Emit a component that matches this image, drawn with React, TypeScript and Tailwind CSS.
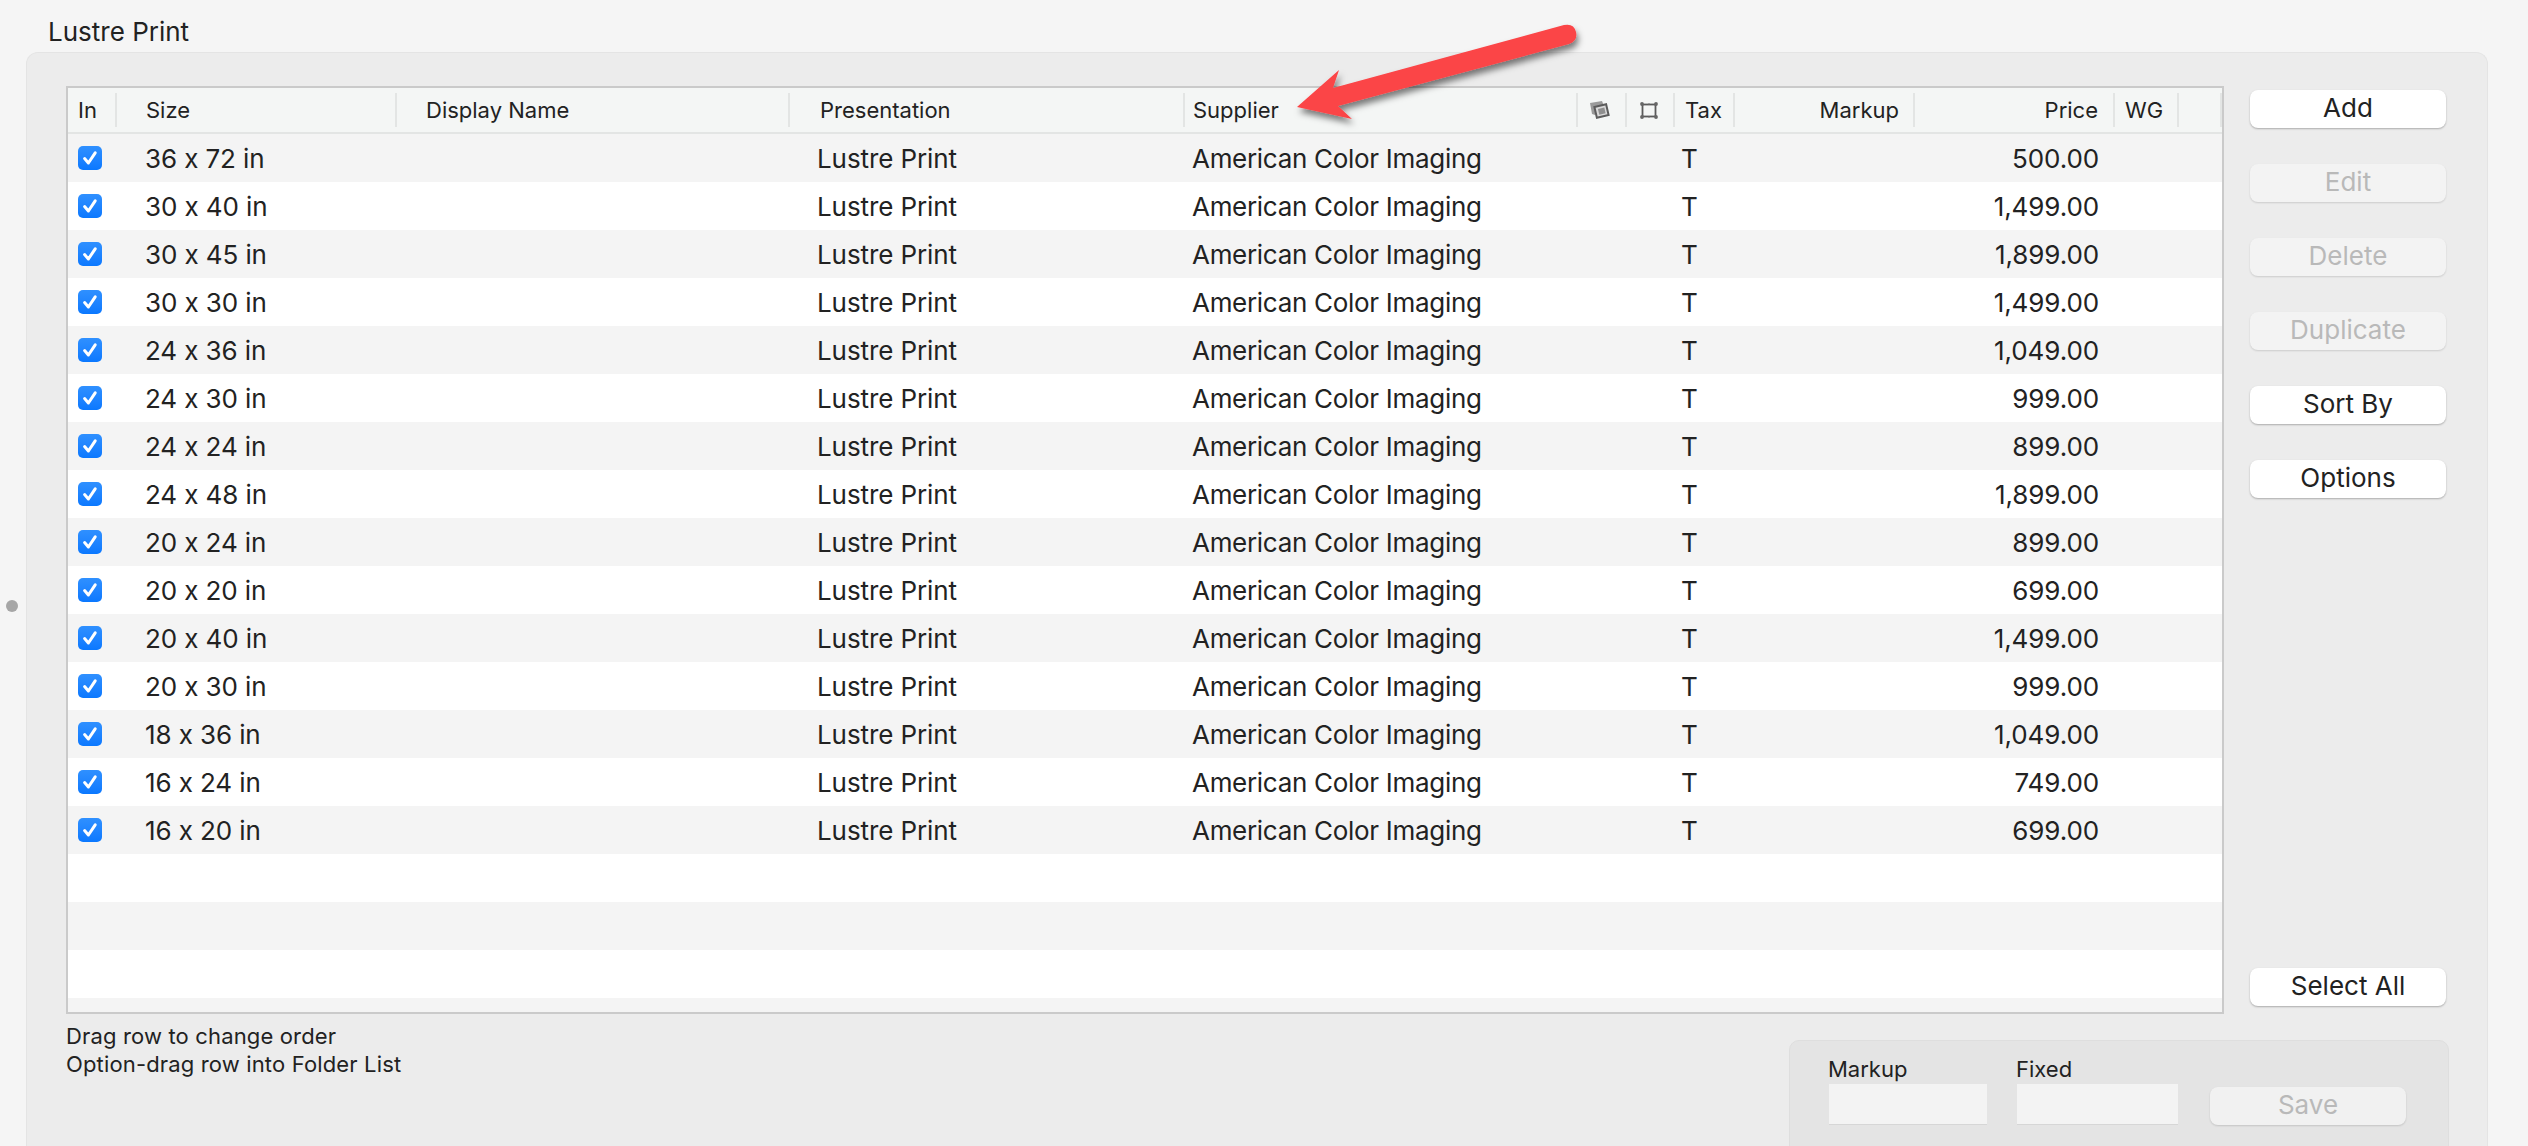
const rows = [
  ["36 x 72 in", "500.00"],
  ["30 x 40 in", "1,499.00"],
  ["30 x 45 in", "1,899.00"],
  ["30 x 30 in", "1,499.00"],
  ["24 x 36 in", "1,049.00"],
  ["24 x 30 in", "999.00"],
  ["24 x 24 in", "899.00"],
  ["24 x 48 in", "1,899.00"],
  ["20 x 24 in", "899.00"],
  ["20 x 20 in", "699.00"],
  ["20 x 40 in", "1,499.00"],
  ["20 x 30 in", "999.00"],
  ["18 x 36 in", "1,049.00"],
  ["16 x 24 in", "749.00"],
  ["16 x 20 in", "699.00"],
];

const gridCols =
  "grid grid-cols-[49px_280px_393px_395px_393px_49px_48px_60px_180px_200px_64px_43px]";

function Checkbox() {
  return (
    <div className="ml-[10px] flex h-6 w-6 items-center justify-center rounded-[5px] bg-gradient-to-b from-[#2f90ff] to-[#0a78ff]">
      <svg width="18" height="18" viewBox="0 0 18 18" fill="none">
        <path d="M3.6 9.6 7.4 14 14.2 3.8" stroke="white" strokeWidth="3" strokeLinecap="round" strokeLinejoin="round" />
      </svg>
    </div>
  );
}

function StackIcon() {
  return (
    <svg width="22" height="20" viewBox="0 0 22 20" fill="none">
      <path d="M1 3 13 1 15 6 6 8 6 15 3 14Z" fill="#9a9a9a" />
      <rect x="6.5" y="5.5" width="12" height="11" fill="#d9d9d9" stroke="#5c5c5c" strokeWidth="2" transform="rotate(-13 12.5 11)" />
      <rect x="9.5" y="8.3" width="6.5" height="5.8" fill="#8f8f8f" transform="rotate(-13 12.5 11)" />
    </svg>
  );
}

function FrameIcon() {
  return (
    <svg width="20" height="19" viewBox="0 0 20 19" fill="none">
      <rect x="3.5" y="3.5" width="13" height="12" stroke="#5a5a5a" strokeWidth="1.8" />
      <circle cx="3" cy="3" r="1.9" fill="#666666" />
      <circle cx="17" cy="3" r="1.9" fill="#666666" />
      <circle cx="3" cy="16" r="1.9" fill="#666666" />
      <circle cx="17" cy="16" r="1.9" fill="#666666" />
      <path d="M10 2.6v1.4M10 15v1.4" stroke="#666666" strokeWidth="1.4" />
    </svg>
  );
}

function HeaderCell({ children, className = "" }: { children?: React.ReactNode; className?: string }) {
  return (
    <div className={`flex h-[34px] items-center border-r-2 border-[#e3e5e4] ${className}`}>{children}</div>
  );
}

function Button({ label, disabled = false }: { label: string; disabled?: boolean }) {
  return (
    <button
      className={
        disabled
          ? "h-[38px] w-[196px] rounded-[8px] bg-[#f3f3f3] pb-[2px] text-[26px] leading-[34px] text-[#b9b9b9] shadow-[0_1px_2px_rgba(0,0,0,0.14)]"
          : "h-[38px] w-[196px] rounded-[8px] bg-white pb-[2px] text-[26px] leading-[34px] text-[#222222] shadow-[0_1px_2px_rgba(0,0,0,0.28)]"
      }
    >
      {label}
    </button>
  );
}

export default function App() {
  return (
    <div className="relative flex h-[1146px] w-[2528px] flex-col overflow-hidden bg-[#f5f5f5] font-['Inter',sans-serif] text-[#222222] [font-feature-settings:'calt'_0]">
      {/* splitter handle */}
      <div className="absolute left-[6px] top-[600px] h-3 w-3 rounded-full bg-[#a6a6a6]"></div>

      <div className="flex h-[52px] shrink-0 items-center pl-[48px] pt-[10px] text-[26px]">Lustre Print</div>

      <div className="ml-[26px] flex min-h-0 w-[2462px] flex-1 flex-col overflow-hidden rounded-t-[12px] border border-b-0 border-[#e4e4e4] bg-[#ececec] pl-[39px] pt-[33px]">
        <div className="flex shrink-0">
          {/* table */}
          <div className="h-[928px] w-[2158px] border-2 border-[#cacaca] bg-[#f4f4f4]">
            <div className={`${gridCols} h-[46px] items-center border-b-2 border-[#e3e5e4] bg-[#f4f6f5] text-[22px]`}>
              <HeaderCell className="pl-[10px]">In</HeaderCell>
              <HeaderCell className="pl-[29px]">Size</HeaderCell>
              <HeaderCell className="pl-[29px]">Display Name</HeaderCell>
              <HeaderCell className="pl-[30px]">Presentation</HeaderCell>
              <HeaderCell className="pl-[8px]">Supplier</HeaderCell>
              <HeaderCell className="justify-center pr-[3px]"><StackIcon /></HeaderCell>
              <HeaderCell className="justify-center pr-[3px]"><FrameIcon /></HeaderCell>
              <HeaderCell className="pl-[10px]">Tax</HeaderCell>
              <HeaderCell className="justify-end pr-[14px]">Markup</HeaderCell>
              <HeaderCell className="justify-end pr-[15px]">Price</HeaderCell>
              <HeaderCell className="pl-[10px]">WG</HeaderCell>
              <HeaderCell />
            </div>
            {rows.map(([size, price], i) => (
              <div
                key={size + i}
                className={`${gridCols} h-[48px] items-center text-[26px] tracking-[-0.1px] ${i % 2 === 0 ? "bg-[#f4f4f4]" : "bg-white"}`}
              >
                <Checkbox />
                <div className="pl-[28px]">{size}</div>
                <div></div>
                <div className="pl-[27px]">Lustre Print</div>
                <div className="pl-[7px] tracking-[-0.3px]">American Color Imaging</div>
                <div></div>
                <div></div>
                <div className="pl-[6px]">T</div>
                <div></div>
                <div className="pr-[16px] text-right">{price}</div>
              </div>
            ))}
            <div className="h-[48px] bg-white"></div>
            <div className="h-[48px] bg-[#f4f4f4]"></div>
            <div className="h-[48px] bg-white"></div>
          </div>

          {/* buttons */}
          <div className="ml-[26px] flex h-[928px] flex-col gap-9 pb-2 pt-1">
            <Button label="Add" />
            <Button label="Edit" disabled />
            <Button label="Delete" disabled />
            <Button label="Duplicate" disabled />
            <Button label="Sort By" />
            <Button label="Options" />
            <div className="mt-auto">
              <Button label="Select All" />
            </div>
          </div>
        </div>

        <div className="flex justify-between pr-[38px]">
          <div className="pt-[8px] text-[22px] leading-[28px] tracking-[0.15px]">
            <div>Drag row to change order</div>
            <div>Option-drag row into Folder List</div>
          </div>
          <div className="mt-[26px] flex h-[200px] w-[660px] gap-[30px] rounded-t-[10px] border border-[#dedede] bg-[#e4e4e4] pl-[39px] pt-[14px]">
            <div className="w-[158px] text-[22px] leading-[29px]">
              <div className="-ml-px">Markup</div>
              <div className="h-[41px] border-b border-[#d6d6d6] bg-[#f3f3f3]"></div>
            </div>
            <div className="w-[161px] text-[22px] leading-[29px]">
              <div className="-ml-px">Fixed</div>
              <div className="h-[41px] border-b border-[#d6d6d6] bg-[#f3f3f3]"></div>
            </div>
            <div className="ml-[2px] mt-[32px] h-[38px]">
              <button className="h-[38px] w-[196px] rounded-[8px] bg-[#f1f1f1] pb-[2px] text-[26px] leading-[34px] text-[#b9b9b9] shadow-[0_1px_2px_rgba(0,0,0,0.14)]">
                Save
              </button>
            </div>
          </div>
        </div>
      </div>

      {/* annotation arrow */}
      <svg className="absolute left-[1280px] top-[15px]" width="310" height="120" viewBox="0 0 310 120" fill="none">
        <defs>
          <filter id="arrowShadow" x="-20%" y="-40%" width="140%" height="180%">
            <feDropShadow dx="2" dy="5" stdDeviation="3" floodColor="#000000" floodOpacity="0.5" />
          </filter>
        </defs>
        <path
          d="M17 92 L59 55 L53 73 L284 10 Q294 8 296 17 Q298 26 289 29 L58 91 L72 104 Z"
          fill="#fb4446"
          filter="url(#arrowShadow)"
        />
      </svg>
    </div>
  );
}
